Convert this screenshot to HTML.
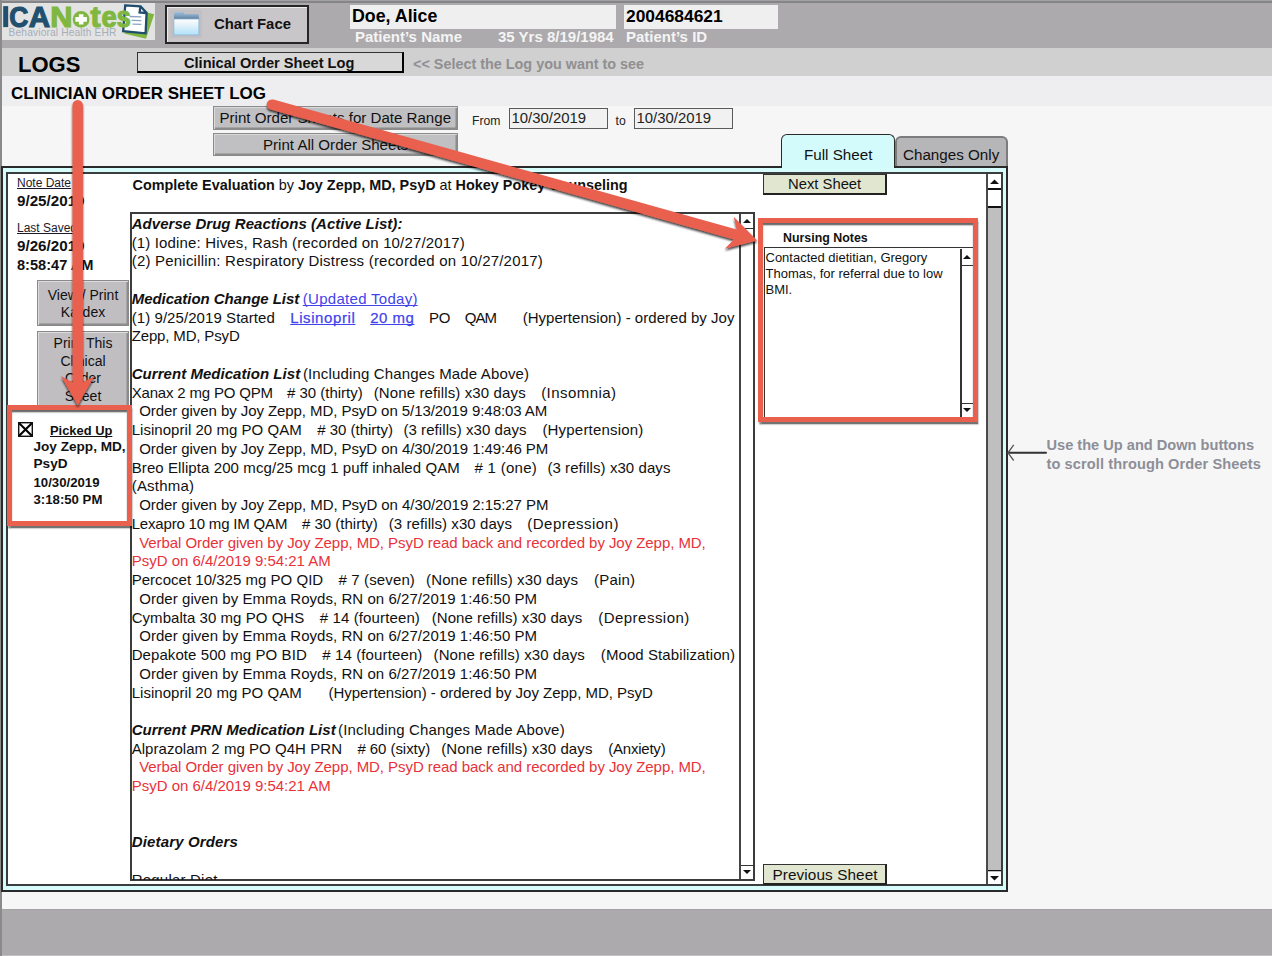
<!DOCTYPE html>
<html><head><meta charset="utf-8"><title>ICANotes - Clinician Order Sheet Log</title>
<style>
html,body{margin:0;padding:0;width:1272px;height:956px;overflow:hidden;position:relative;background:#f6f6f6}
body{font-family:"Liberation Sans",sans-serif}
.t{position:absolute;white-space:pre;line-height:1;font-family:"Liberation Sans",sans-serif}
u{text-decoration-thickness:1.2px;text-underline-offset:1px;text-decoration-skip-ink:none}
</style></head><body>
<div style="position:absolute;left:0px;top:0px;width:1272px;height:956px;background:#f6f6f6"></div>
<div style="position:absolute;left:0px;top:0px;width:1272px;height:48px;background:#acaaad"></div>
<div style="position:absolute;left:0px;top:0px;width:1272px;height:1px;background:#a2a1a3"></div>
<div style="position:absolute;left:0px;top:1px;width:1272px;height:2px;background:#858486"></div>
<div style="position:absolute;left:0px;top:48px;width:1272px;height:28px;background:#d0d0d0"></div>
<div style="position:absolute;left:0px;top:76px;width:1272px;height:30px;background:#eeedef"></div>
<div style="position:absolute;left:0px;top:909.3px;width:1272px;height:46.7px;background:#acaaad"></div>
<div style="position:absolute;left:0px;top:909.3px;width:1272px;height:1.2px;background:#a4a2a5"></div>
<div style="position:absolute;left:0px;top:955px;width:1272px;height:1px;background:#c2c0c3"></div>
<div style="position:absolute;left:0px;top:0px;width:2px;height:956px;background:#8a8a8a"></div>
<div style="position:absolute;left:2px;top:3px;width:153px;height:37px;background:#e3e3e3"></div>
<svg style="position:absolute;left:0;top:0" width="160" height="42">
<polygon points="124,33.5 146,38.8 154.2,14.3 147,12.5" fill="#7fb63f"/>
<path d="M125.2,5.4 L140.6,6.4 L146.6,12.9 L145.6,33.3 L123.2,31.2 Z" fill="#fff" stroke="#1f4d6d" stroke-width="2.3" stroke-linejoin="miter"/>
<polyline points="140.4,6.6 139.6,12.5 146.4,13" fill="none" stroke="#1f4d6d" stroke-width="2.3"/>
<line x1="129.5" y1="16.5" x2="141.4" y2="16.9" stroke="#8aa4c4" stroke-width="1.3"/>
<line x1="131.5" y1="20.4" x2="141.4" y2="20.7" stroke="#8aa4c4" stroke-width="1.3"/>
<line x1="132.5" y1="24.2" x2="141.4" y2="24.4" stroke="#8aa4c4" stroke-width="1.3"/>
</svg>
<svg style="position:absolute;left:0;top:0" width="160" height="42"><rect x="3.2" y="6.1" width="5" height="21" fill="#21506f"/><text transform="translate(9.14,26.6) scale(0.895,1)" x="0" y="0" font-family="Liberation Sans" font-weight="bold" font-size="29.5" fill="#21506f" stroke="#21506f" stroke-width="1.2">C</text><text transform="translate(28.81,26.6) scale(1.002,1)" x="0" y="0" font-family="Liberation Sans" font-weight="bold" font-size="29.5" fill="#21506f" stroke="#21506f" stroke-width="1.2">A</text><text transform="translate(50.26,26.6) scale(1.042,1)" x="0" y="0" font-family="Liberation Sans" font-weight="bold" font-size="29.5" fill="#80b740" stroke="#80b740" stroke-width="1.2">N</text><text transform="translate(90.50,26.6) scale(1.024,1)" x="0" y="0" font-family="Liberation Sans" font-weight="bold" font-size="29.5" fill="#80b740" stroke="#80b740" stroke-width="1.2">t</text><text transform="translate(101.48,26.6) scale(0.928,1)" x="0" y="0" font-family="Liberation Sans" font-weight="bold" font-size="29.5" fill="#80b740" stroke="#80b740" stroke-width="1.2">e</text><text transform="translate(116.74,26.6) scale(0.856,1)" x="0" y="0" font-family="Liberation Sans" font-weight="bold" font-size="29.5" fill="#80b740" stroke="#80b740" stroke-width="1.2">s</text><circle cx="81.1" cy="19.4" r="8.4" fill="#80b740"/><path d="M75.4,17.1 h3.5 v-2.9 h4.5 v2.9 h3.5 v4.6 h-3.5 v2.8 h-4.5 v-2.8 h-3.5z" fill="#fff"/></svg>
<div class="t" style="left:8.6px;top:28px;font-size:10.2px;font-weight:normal;font-style:normal;color:#a5aeb9;letter-spacing:0.15px;">Behavioral Health EHR</div>
<div style="position:absolute;left:165px;top:5px;width:144px;height:39px;background:#c8c6c9;box-sizing:border-box;border:2px solid #262626;box-shadow:inset 1px 1px 0 #ececec"></div>
<div style="position:absolute;left:170px;top:10px;width:32px;height:28px;background:#c1bfc2"></div>
<svg style="position:absolute;left:173px;top:11px" width="27" height="25" viewBox="0 0 27 25">
<defs><linearGradient id="fg" x1="0" y1="0" x2="0" y2="1"><stop offset="0" stop-color="#ffffff"/><stop offset="0.25" stop-color="#eef6fb"/><stop offset="1" stop-color="#b0e1f8"/></linearGradient>
<linearGradient id="fb" x1="0" y1="0" x2="0" y2="1"><stop offset="0" stop-color="#94bde0"/><stop offset="0.5" stop-color="#7f9fbd"/><stop offset="1" stop-color="#4a6d8b"/></linearGradient></defs>
<path d="M1,4 Q1,1.3 3,1.3 H9.5 Q11,1.3 11.5,3.3 H25 Q25.8,3.3 25.8,5 V9 H1z" fill="url(#fb)"/>
<rect x="0.9" y="8" width="25" height="16" fill="url(#fg)" stroke="#8cb4d8" stroke-width="0.8"/>
</svg>
<div class="t" style="left:214px;top:17.3px;font-size:14.9px;font-weight:bold;font-style:normal;color:#111;">Chart Face</div>
<div style="position:absolute;left:350px;top:5px;width:266px;height:24px;background:#efefef"></div>
<div style="position:absolute;left:624px;top:5px;width:154px;height:24px;background:#efefef"></div>
<div class="t" style="left:352px;top:8px;font-size:17.8px;font-weight:bold;font-style:normal;color:#000;">Doe, Alice</div>
<div class="t" style="left:626px;top:8px;font-size:17.4px;font-weight:bold;font-style:normal;color:#000;">2004684621</div>
<div class="t" style="left:355px;top:29px;font-size:15px;font-weight:bold;font-style:normal;color:#f4f4f4;">Patient’s Name</div>
<div class="t" style="left:498px;top:29px;font-size:15px;font-weight:bold;font-style:normal;color:#f4f4f4;">35 Yrs 8/19/1984</div>
<div class="t" style="left:626px;top:29px;font-size:15px;font-weight:bold;font-style:normal;color:#f4f4f4;">Patient’s ID</div>
<div class="t" style="left:18px;top:54px;font-size:22px;font-weight:bold;font-style:normal;color:#000;">LOGS</div>
<div style="position:absolute;left:137px;top:52px;width:267px;height:21px;background:#d8d8d8;box-sizing:border-box;border:1px solid #333;border-right:2px solid #000;border-bottom:2px solid #000"></div>
<div class="t" style="left:184px;top:56px;font-size:14.6px;font-weight:bold;font-style:normal;color:#111;">Clinical Order Sheet Log</div>
<div class="t" style="left:413px;top:57px;font-size:14.4px;font-weight:bold;font-style:normal;color:#8f8f91;">&lt;&lt; Select the Log you want to see</div>
<div class="t" style="left:11px;top:85px;font-size:17px;font-weight:bold;font-style:normal;color:#000;">CLINICIAN ORDER SHEET LOG</div>
<div style="position:absolute;left:213px;top:106px;width:245px;height:24px;background:#c0bfc1;box-sizing:border-box;border:1px solid #8a8a8a;box-shadow:inset 1px 1px 0 #dadada, inset -1.5px -1.5px 0 #8c8c8c"></div>
<div style="position:absolute;left:213px;top:133px;width:245px;height:23px;background:#c0bfc1;box-sizing:border-box;border:1px solid #8a8a8a;box-shadow:inset 1px 1px 0 #dadada, inset -1.5px -1.5px 0 #8c8c8c"></div>
<div class="t" style="left:219.5px;top:110px;font-size:15.1px;font-weight:normal;font-style:normal;color:#111;">Print Order Sheets for Date Range</div>
<div class="t" style="left:263px;top:137px;font-size:15.1px;font-weight:normal;font-style:normal;color:#111;">Print All Order Sheets</div>
<div class="t" style="left:472px;top:114.5px;font-size:12.2px;font-weight:normal;font-style:normal;color:#222;">From</div>
<div style="position:absolute;left:509px;top:108px;width:99px;height:21px;background:#f1f1f1;box-sizing:border-box;border:1.5px solid #5a5a5a"></div>
<div class="t" style="left:511.5px;top:111px;font-size:14.9px;font-weight:normal;font-style:normal;color:#222;">10/30/2019</div>
<div class="t" style="left:615.5px;top:114.5px;font-size:12.2px;font-weight:normal;font-style:normal;color:#222;">to</div>
<div style="position:absolute;left:634px;top:108px;width:99px;height:21px;background:#f1f1f1;box-sizing:border-box;border:1.5px solid #5a5a5a"></div>
<div class="t" style="left:636.5px;top:111px;font-size:14.9px;font-weight:normal;font-style:normal;color:#222;">10/30/2019</div>
<div style="position:absolute;left:894.5px;top:136px;width:113.5px;height:32px;box-sizing:border-box;background:#b6b5b7;border:2px solid #7c7c7c;border-bottom:none;border-radius:6px 6px 0 0"></div>
<div class="t" style="left:903px;top:147px;font-size:15.2px;font-weight:normal;font-style:normal;color:#111;">Changes Only</div>
<div style="position:absolute;left:1px;top:166px;width:1007px;height:726px;background:#d6fcfc;box-sizing:border-box;border:2px solid #2a2a2a"></div>
<div style="position:absolute;left:781px;top:134px;width:114px;height:34px;box-sizing:border-box;background:#d4fbfb;border:1.5px solid #2a2a2a;border-bottom:none;border-radius:6px 6px 0 0"></div>
<div class="t" style="left:804px;top:147px;font-size:15.2px;font-weight:normal;font-style:normal;color:#111;">Full Sheet</div>
<div style="position:absolute;left:6px;top:172px;width:997px;height:714px;background:#fff;box-sizing:border-box;border:2px solid #3a3d3d"></div>
<div style="position:absolute;left:986px;top:174px;width:15px;height:710px;background:#bfbfbf;box-sizing:border-box;border-left:2px solid #4a4a4a"></div>
<div style="position:absolute;left:988px;top:174px;width:13px;height:14px;background:#fff"></div>
<div style="position:absolute;left:988px;top:188px;width:13px;height:1.8px;background:#111"></div>
<div style="position:absolute;left:988px;top:190px;width:13px;height:16px;background:#fff"></div>
<div style="position:absolute;left:988px;top:206px;width:13px;height:1.8px;background:#111"></div>
<div style="position:absolute;left:988px;top:871.5px;width:13px;height:12.5px;background:#fff"></div>
<div style="position:absolute;left:988px;top:869.7px;width:13px;height:1.8px;background:#111"></div>
<svg style="position:absolute;left:988px;top:176px" width="13" height="10"><polygon points="2,8 11,8 6.5,3.5" fill="#111"/></svg>
<svg style="position:absolute;left:988px;top:873px" width="13" height="10"><polygon points="2,3 11,3 6.5,7.5" fill="#111"/></svg>
<div class="t" style="left:17px;top:177px;font-size:12px;font-weight:normal;font-style:normal;color:#1a1a2a;"><u>Note Date</u></div>
<div class="t" style="left:17px;top:193px;font-size:15.2px;font-weight:bold;font-style:normal;color:#111;">9/25/2019</div>
<div class="t" style="left:17px;top:222px;font-size:12px;font-weight:normal;font-style:normal;color:#1a1a2a;"><u>Last Saved</u></div>
<div class="t" style="left:17px;top:238px;font-size:15.2px;font-weight:bold;font-style:normal;color:#111;">9/26/2019</div>
<div class="t" style="left:17px;top:258px;font-size:14.6px;font-weight:bold;font-style:normal;color:#111;">8:58:47 AM</div>
<div style="position:absolute;left:37px;top:280px;width:92px;height:46px;background:#c0bec1;box-sizing:border-box;border:1px solid #8a8a8a;box-shadow:inset 1px 1px 0 #dcdcdc, inset -1.5px -1.5px 0 #8c8c8c"></div>
<div style="position:absolute;left:37px;top:331px;width:92px;height:80px;background:#c0bec1;box-sizing:border-box;border:1px solid #8a8a8a;box-shadow:inset 1px 1px 0 #dcdcdc, inset -1.5px -1.5px 0 #8c8c8c"></div>
<div class="t" style="left:37px;width:92px;text-align:center;top:288px;font-size:14px;color:#111">View / Print</div>
<div class="t" style="left:37px;width:92px;text-align:center;top:305px;font-size:14px;color:#111">Kardex</div>
<div class="t" style="left:37px;width:92px;text-align:center;top:336px;font-size:14px;color:#111">Print This</div>
<div class="t" style="left:37px;width:92px;text-align:center;top:354px;font-size:14px;color:#111">Clinical</div>
<div class="t" style="left:37px;width:92px;text-align:center;top:371px;font-size:14px;color:#111">Order</div>
<div class="t" style="left:37px;width:92px;text-align:center;top:389px;font-size:14px;color:#111">Sheet</div>
<div style="position:absolute;left:12px;top:410px;width:115px;height:110px;background:#fff"></div>
<svg style="position:absolute;left:18px;top:422px" width="15" height="15"><rect x="0.7" y="0.7" width="13.6" height="13.6" fill="#fff" stroke="#111" stroke-width="1.4"/><line x1="1.2" y1="1.2" x2="13.8" y2="13.8" stroke="#000" stroke-width="2.1"/><line x1="13.8" y1="1.2" x2="1.2" y2="13.8" stroke="#000" stroke-width="2.1"/></svg>
<div class="t" style="left:50px;top:424.5px;font-size:12.9px;font-weight:bold;font-style:normal;color:#111;"><u>Picked Up</u></div>
<div class="t" style="left:33.5px;top:440px;font-size:13.6px;font-weight:bold;font-style:normal;color:#111;">Joy Zepp, MD,</div>
<div class="t" style="left:33.5px;top:457px;font-size:13.6px;font-weight:bold;font-style:normal;color:#111;">PsyD</div>
<div class="t" style="left:33.5px;top:475.5px;font-size:13.2px;font-weight:bold;font-style:normal;color:#111;">10/30/2019</div>
<div class="t" style="left:33.5px;top:493px;font-size:13.2px;font-weight:bold;font-style:normal;color:#111;">3:18:50 PM</div>
<div class="t" style="left:132.5px;top:178px;font-size:14.4px;font-weight:bold;font-style:normal;color:#111;">Complete Evaluation <span style="font-weight:normal">by</span> Joy Zepp, MD, PsyD <span style="font-weight:normal">at</span> Hokey Pokey Counseling</div>
<div style="position:absolute;left:763px;top:173.5px;width:124px;height:21px;background:#e0e6d0;box-sizing:border-box;border:1.5px solid #333;border-right:2px solid #222;border-bottom:2px solid #222"></div>
<div class="t" style="left:788px;top:177px;font-size:14.8px;font-weight:normal;font-style:normal;color:#111;">Next Sheet</div>
<div style="position:absolute;left:763px;top:864px;width:124px;height:21px;background:#e0e6d0;box-sizing:border-box;border:1.5px solid #333;border-right:2px solid #222;border-bottom:2px solid #222"></div>
<div class="t" style="left:772.5px;top:866.5px;font-size:15.3px;font-weight:normal;font-style:normal;color:#111;letter-spacing:0.1px;">Previous Sheet</div>
<div style="position:absolute;left:130px;top:212px;width:625px;height:669px;background:#fff;box-sizing:border-box;border:2px solid #3c3c3c"></div>
<div style="position:absolute;left:739px;top:214px;width:2px;height:665px;background:#454545"></div>
<div style="position:absolute;left:740.6px;top:227.8px;width:14px;height:1.6px;background:#333"></div>
<div style="position:absolute;left:740.6px;top:864.5px;width:14px;height:1.6px;background:#333"></div>
<svg style="position:absolute;left:740px;top:214px" width="14" height="13"><polygon points="3,9 11,9 7,5" fill="#111"/></svg>
<svg style="position:absolute;left:740px;top:866px" width="14" height="13"><polygon points="3,4 11,4 7,8" fill="#111"/></svg>
<div style="position:absolute;left:132px;top:213.5px;width:607px;height:666px;overflow:hidden">
<div id="s0" class="t" style="left:-0.30px;top:2.50px;font-size:15px;color:#111;letter-spacing:0.040px;"><b><i>Adverse Drug Reactions (Active List):</i></b></div>
<div id="s1" class="t" style="left:-0.30px;top:21.24px;font-size:15px;color:#111;letter-spacing:0.148px;">(1) Iodine: Hives, Rash (recorded on 10/27/2017)</div>
<div id="s2" class="t" style="left:-0.30px;top:39.98px;font-size:15px;color:#111;letter-spacing:0.210px;">(2) Penicillin: Respiratory Distress (recorded on 10/27/2017)</div>
<div id="s3" class="t" style="left:-0.30px;top:77.46px;font-size:15px;color:#111;letter-spacing:-0.039px;"><b><i>Medication Change List</i></b></div>
<div id="s4" class="t" style="left:170.80px;top:77.46px;font-size:15px;color:#4343ec;letter-spacing:0.285px;"><u>(Updated Today)</u></div>
<div id="s5" class="t" style="left:-0.30px;top:96.20px;font-size:15px;color:#111;letter-spacing:0.068px;">(1) 9/25/2019 Started</div>
<div id="s6" class="t" style="left:158.20px;top:96.20px;font-size:15px;color:#4343ec;letter-spacing:0.600px;-webkit-text-stroke:0.25px #4343ec"><u>Lisinopril</u></div>
<div id="s7" class="t" style="left:238.20px;top:96.20px;font-size:15px;color:#4343ec;letter-spacing:0.519px;-webkit-text-stroke:0.25px #4343ec"><u>20 mg</u></div>
<div id="s8" class="t" style="left:296.90px;top:96.20px;font-size:15px;color:#111;letter-spacing:-0.144px;">PO</div>
<div id="s9" class="t" style="left:332.70px;top:96.20px;font-size:15px;color:#111;letter-spacing:-0.891px;">QAM</div>
<div id="s10" class="t" style="left:390.70px;top:96.20px;font-size:15px;color:#111;letter-spacing:0.028px;">(Hypertension) - ordered by Joy</div>
<div id="s11" class="t" style="left:-0.30px;top:114.94px;font-size:15px;color:#111;letter-spacing:-0.152px;">Zepp, MD, PsyD</div>
<div id="s12" class="t" style="left:-0.30px;top:152.42px;font-size:15px;color:#111;letter-spacing:0.043px;"><b><i>Current Medication List</i></b></div>
<div id="s13" class="t" style="left:170.90px;top:152.42px;font-size:15px;color:#111;letter-spacing:0.150px;">(Including Changes Made Above)</div>
<div id="s14" class="t" style="left:-0.30px;top:171.16px;font-size:15px;color:#111;letter-spacing:-0.178px;">Xanax 2 mg PO QPM</div>
<div id="s15" class="t" style="left:154.90px;top:171.16px;font-size:15px;color:#111;letter-spacing:-0.005px;"># 30 (thirty)</div>
<div id="s16" class="t" style="left:241.70px;top:171.16px;font-size:15px;color:#111;letter-spacing:0.125px;">(None refills) x30 days</div>
<div id="s17" class="t" style="left:409.20px;top:171.16px;font-size:15px;color:#111;letter-spacing:0.434px;">(Insomnia)</div>
<div id="s18" class="t" style="left:7.20px;top:189.90px;font-size:15px;color:#111;letter-spacing:-0.068px;">Order given by Joy Zepp, MD, PsyD on 5/13/2019 9:48:03 AM</div>
<div id="s19" class="t" style="left:-0.30px;top:208.64px;font-size:15px;color:#111;letter-spacing:0.038px;">Lisinopril 20 mg PO QAM</div>
<div id="s20" class="t" style="left:185.20px;top:208.64px;font-size:15px;color:#111;letter-spacing:-0.012px;"># 30 (thirty)</div>
<div id="s21" class="t" style="left:271.40px;top:208.64px;font-size:15px;color:#111;letter-spacing:0.074px;">(3 refills) x30 days</div>
<div id="s22" class="t" style="left:410.40px;top:208.64px;font-size:15px;color:#111;letter-spacing:0.195px;">(Hypertension)</div>
<div id="s23" class="t" style="left:7.20px;top:227.38px;font-size:15px;color:#111;letter-spacing:-0.065px;">Order given by Joy Zepp, MD, PsyD on 4/30/2019 1:49:46 PM</div>
<div id="s24" class="t" style="left:-0.30px;top:246.12px;font-size:15px;color:#111;letter-spacing:0.090px;">Breo Ellipta 200 mcg/25 mcg 1 puff inhaled QAM</div>
<div id="s25" class="t" style="left:342.50px;top:246.12px;font-size:15px;color:#111;letter-spacing:0.284px;"># 1 (one)</div>
<div id="s26" class="t" style="left:415.40px;top:246.12px;font-size:15px;color:#111;letter-spacing:0.069px;">(3 refills) x30 days</div>
<div id="s27" class="t" style="left:-0.30px;top:264.86px;font-size:15px;color:#111;letter-spacing:0.195px;">(Asthma)</div>
<div id="s28" class="t" style="left:7.20px;top:283.60px;font-size:15px;color:#111;letter-spacing:-0.062px;">Order given by Joy Zepp, MD, PsyD on 4/30/2019 2:15:27 PM</div>
<div id="s29" class="t" style="left:-0.30px;top:302.34px;font-size:15px;color:#111;letter-spacing:-0.187px;">Lexapro 10 mg IM QAM</div>
<div id="s30" class="t" style="left:170.00px;top:302.34px;font-size:15px;color:#111;letter-spacing:-0.005px;"># 30 (thirty)</div>
<div id="s31" class="t" style="left:256.80px;top:302.34px;font-size:15px;color:#111;letter-spacing:0.074px;">(3 refills) x30 days</div>
<div id="s32" class="t" style="left:395.30px;top:302.34px;font-size:15px;color:#111;letter-spacing:0.477px;">(Depression)</div>
<div id="s33" class="t" style="left:7.20px;top:321.08px;font-size:15px;color:#e8323a;letter-spacing:-0.057px;">Verbal Order given by Joy Zepp, MD, PsyD read back and recorded by Joy Zepp, MD,</div>
<div id="s34" class="t" style="left:-0.30px;top:339.82px;font-size:15px;color:#e8323a;letter-spacing:-0.012px;">PsyD on 6/4/2019 9:54:21 AM</div>
<div id="s35" class="t" style="left:-0.30px;top:358.56px;font-size:15px;color:#111;letter-spacing:0.023px;">Percocet 10/325 mg PO QID</div>
<div id="s36" class="t" style="left:206.50px;top:358.56px;font-size:15px;color:#111;letter-spacing:0.132px;"># 7 (seven)</div>
<div id="s37" class="t" style="left:294.10px;top:358.56px;font-size:15px;color:#111;letter-spacing:0.120px;">(None refills) x30 days</div>
<div id="s38" class="t" style="left:462.00px;top:358.56px;font-size:15px;color:#111;letter-spacing:0.197px;">(Pain)</div>
<div id="s39" class="t" style="left:7.20px;top:377.30px;font-size:15px;color:#111;letter-spacing:0.051px;">Order given by Emma Royds, RN on 6/27/2019 1:46:50 PM</div>
<div id="s40" class="t" style="left:-0.30px;top:396.04px;font-size:15px;color:#111;letter-spacing:0.041px;">Cymbalta 30 mg PO QHS</div>
<div id="s41" class="t" style="left:187.70px;top:396.04px;font-size:15px;color:#111;letter-spacing:0.126px;"># 14 (fourteen)</div>
<div id="s42" class="t" style="left:299.70px;top:396.04px;font-size:15px;color:#111;letter-spacing:0.064px;">(None refills) x30 days</div>
<div id="s43" class="t" style="left:466.20px;top:396.04px;font-size:15px;color:#111;letter-spacing:0.477px;">(Depression)</div>
<div id="s44" class="t" style="left:7.20px;top:414.78px;font-size:15px;color:#111;letter-spacing:0.051px;">Order given by Emma Royds, RN on 6/27/2019 1:46:50 PM</div>
<div id="s45" class="t" style="left:-0.30px;top:433.52px;font-size:15px;color:#111;letter-spacing:0.076px;">Depakote 500 mg PO BID</div>
<div id="s46" class="t" style="left:190.20px;top:433.52px;font-size:15px;color:#111;letter-spacing:0.126px;"># 14 (fourteen)</div>
<div id="s47" class="t" style="left:301.60px;top:433.52px;font-size:15px;color:#111;letter-spacing:0.090px;">(None refills) x30 days</div>
<div id="s48" class="t" style="left:468.80px;top:433.52px;font-size:15px;color:#111;letter-spacing:0.087px;">(Mood Stabilization)</div>
<div id="s49" class="t" style="left:7.20px;top:452.26px;font-size:15px;color:#111;letter-spacing:0.051px;">Order given by Emma Royds, RN on 6/27/2019 1:46:50 PM</div>
<div id="s50" class="t" style="left:-0.30px;top:471.00px;font-size:15px;color:#111;letter-spacing:0.038px;">Lisinopril 20 mg PO QAM</div>
<div id="s51" class="t" style="left:196.50px;top:471.00px;font-size:15px;color:#111;letter-spacing:-0.018px;">(Hypertension) - ordered by Joy Zepp, MD, PsyD</div>
<div id="s52" class="t" style="left:-0.30px;top:508.48px;font-size:15px;color:#111;letter-spacing:0.024px;"><b><i>Current PRN Medication List</i></b></div>
<div id="s53" class="t" style="left:206.00px;top:508.48px;font-size:15px;color:#111;letter-spacing:0.166px;">(Including Changes Made Above)</div>
<div id="s54" class="t" style="left:-0.30px;top:527.22px;font-size:15px;color:#111;letter-spacing:0.041px;">Alprazolam 2 mg PO Q4H PRN</div>
<div id="s55" class="t" style="left:225.40px;top:527.22px;font-size:15px;color:#111;letter-spacing:-0.055px;"># 60 (sixty)</div>
<div id="s56" class="t" style="left:309.20px;top:527.22px;font-size:15px;color:#111;letter-spacing:0.090px;">(None refills) x30 days</div>
<div id="s57" class="t" style="left:476.30px;top:527.22px;font-size:15px;color:#111;letter-spacing:-0.232px;">(Anxiety)</div>
<div id="s58" class="t" style="left:7.20px;top:545.96px;font-size:15px;color:#e8323a;letter-spacing:-0.057px;">Verbal Order given by Joy Zepp, MD, PsyD read back and recorded by Joy Zepp, MD,</div>
<div id="s59" class="t" style="left:-0.30px;top:564.70px;font-size:15px;color:#e8323a;letter-spacing:-0.012px;">PsyD on 6/4/2019 9:54:21 AM</div>
<div id="s60" class="t" style="left:-0.30px;top:620.92px;font-size:15px;color:#111;letter-spacing:0.156px;"><b><i>Dietary Orders</i></b></div>
<div id="s61" class="t" style="left:-0.30px;top:658.40px;font-size:15px;color:#111;letter-spacing:0.210px;">Regular Diet</div>
</div>
<div style="position:absolute;left:763px;top:223px;width:210px;height:193.6px;background:#fff"></div>
<div class="t" style="left:783px;top:231.5px;font-size:12.4px;font-weight:bold;font-style:normal;color:#111;">Nursing Notes</div>
<div style="position:absolute;left:764px;top:247px;width:209px;height:170px;background:#fff;box-sizing:border-box;border-top:1.8px solid #333;border-left:1.8px solid #333"></div>
<div class="t" style="left:765.5px;top:250.5px;font-size:13px;font-weight:normal;font-style:normal;color:#111;">Contacted dietitian, Gregory</div>
<div class="t" style="left:765.5px;top:266.5px;font-size:13px;font-weight:normal;font-style:normal;color:#111;">Thomas, for referral due to low</div>
<div class="t" style="left:765.5px;top:282.5px;font-size:13px;font-weight:normal;font-style:normal;color:#111;">BMI.</div>
<div style="position:absolute;left:960px;top:248.5px;width:1.6px;height:168px;background:#333"></div>
<div style="position:absolute;left:961.6px;top:264.5px;width:11px;height:1.6px;background:#333"></div>
<div style="position:absolute;left:961.6px;top:402.5px;width:11px;height:1.6px;background:#333"></div>
<svg style="position:absolute;left:961px;top:249px" width="12" height="15"><polygon points="2,10 10,10 6,6" fill="#111"/></svg>
<svg style="position:absolute;left:961px;top:404px" width="12" height="12"><polygon points="2,4 10,4 6,8" fill="#111"/></svg>
<div style="position:absolute;left:758px;top:218px;width:220px;height:203.6px;box-sizing:border-box;border:5px solid #e9604f;box-shadow:0.5px 2.5px 1.5px rgba(0,0,0,.55), inset 0 2.2px 1.2px rgba(0,0,0,.6)"></div>
<div style="position:absolute;left:6.8px;top:405px;width:125.7px;height:120.8px;box-sizing:border-box;border:5.2px solid #e9604f;box-shadow:0.5px 2.5px 1.5px rgba(0,0,0,.55), inset 0 2.2px 1.2px rgba(0,0,0,.6)"></div>
<div class="t" style="left:1046.5px;top:438.2px;font-size:14.6px;font-weight:bold;font-style:normal;color:#8d8e98;">Use the Up and Down buttons</div>
<div class="t" style="left:1046.5px;top:457.2px;font-size:14.6px;font-weight:bold;font-style:normal;color:#8d8e98;letter-spacing:0.09px;">to scroll through Order Sheets</div>
<svg style="position:absolute;left:1000px;top:440px" width="50" height="26">
<line x1="8" y1="12.8" x2="46" y2="12.8" stroke="#333" stroke-width="2" stroke-linecap="round"/>
<polyline points="13.7,4.9 8,12.8 13.7,20.5" fill="none" stroke="#555" stroke-width="1.3"/>
</svg>
<svg style="position:absolute;left:0;top:0" width="1272" height="956">
<defs><filter id="sh" x="-10%" y="-10%" width="120%" height="120%"><feGaussianBlur in="SourceAlpha" stdDeviation="1.2"/><feOffset dx="0" dy="2.3" result="b"/><feComponentTransfer><feFuncA type="linear" slope="0.75"/></feComponentTransfer><feMerge><feMergeNode/><feMergeNode in="SourceGraphic"/></feMerge></filter></defs>
<path d="M273.40,99.59 L736.75,229.47 L733.76,216.79 L757.20,240.60 L724.80,248.76 L733.94,239.48 L270.60,109.61 A5.2,5.2 0 0 1 273.40,99.59 Z" fill="#e9604f" filter="url(#sh)"/>
<path d="M82.90,105.20 L82.95,382.30 L94.50,376.00 L77.75,405.50 L61.00,376.00 L72.55,382.30 L72.50,105.20 A5.2,5.2 0 0 1 82.90,105.20 Z" fill="#e9604f" filter="url(#sh)"/>
</svg>
</body></html>
